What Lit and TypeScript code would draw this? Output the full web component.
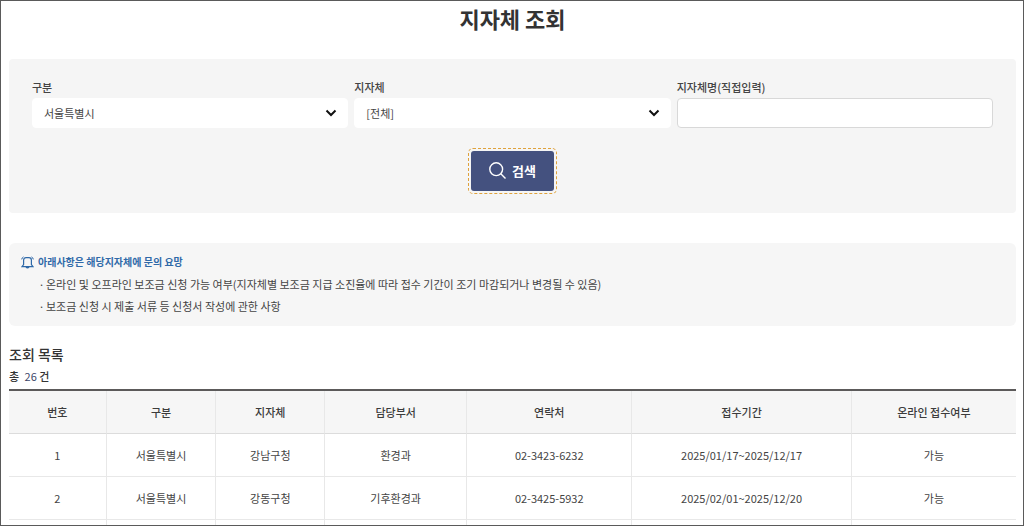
import { LitElement, html, css } from "lit";
import { customElement, property, state } from "lit/decorators.js";

interface Office {
  no: number;
  region: string;
  name: string;
  department: string;
  phone: string;
  period: string;
  online: string;
}

const OFFICES: Office[] = [
  { no: 1, region: "서울특별시", name: "강남구청", department: "환경과", phone: "02-3423-6232", period: "2025/01/17~2025/12/17", online: "가능" },
  { no: 2, region: "서울특별시", name: "강동구청", department: "기후환경과", phone: "02-3425-5932", period: "2025/02/01~2025/12/20", online: "가능" },
];

@customElement("search-panel")
class SearchPanel extends LitElement {
  static styles = css`
    :host {
      display: block;
    }
    .panel {
      display: flex;
      flex-direction: column;
      align-items: center;
      gap: 23px;
      padding: 18px 23px 22px;
      border-radius: 4px;
      background: #f5f5f5;
    }
    .fields {
      display: grid;
      grid-template-columns: repeat(3, 1fr);
      gap: 6px;
      align-self: stretch;
    }
    .field {
      display: flex;
      flex-direction: column;
      gap: 1px;
      min-width: 0;
    }
    .label {
      font-size: 11px;
      line-height: 20px;
      font-weight: 500;
      color: #444;
    }
    .picker {
      display: grid;
      align-items: center;
    }
    .picker > * {
      grid-area: 1 / 1;
    }
    .control {
      box-sizing: border-box;
      width: 100%;
      height: 30px;
      margin: 0;
      padding: 0 11px;
      border: 1px solid #fff;
      border-radius: 4px;
      background: #fff;
      color: #444;
      font: inherit;
      font-size: 11px;
      appearance: none;
    }
    .text {
      border-color: #d8d8d8;
    }
    .chevron {
      justify-self: end;
      width: 12px;
      height: 8px;
      margin-right: 11px;
      pointer-events: none;
    }
    .search {
      display: flex;
      align-items: center;
      justify-content: center;
      gap: 6px;
      height: 40px;
      padding: 0 18px 2px;
      border: 0;
      border-radius: 3px;
      background: #44517f;
      color: #fff;
      font: inherit;
      font-size: 13px;
      font-weight: 700;
    }
    .focus {
      margin: -3px;
      padding: 2px;
      border: 1px dashed #dfa23c;
      border-radius: 5px;
    }
    .lens {
      width: 17px;
      height: 17px;
    }
  `;

  private chevron() {
    return html`<svg class="chevron" viewBox="0 0 12 8" aria-hidden="true">
      <path d="M1.5 1.5 6 6l4.500-4.500" fill="none" stroke="#111" stroke-width="2" />
    </svg>`;
  }

  render() {
    return html`
      <form class="panel" @submit=${(e: Event) => e.preventDefault()}>
        <div class="fields">
          <div class="field">
            <label class="label" for="region">구분</label>
            <div class="picker">
              <select class="control" id="region"><option>서울특별시</option></select>
              ${this.chevron()}
            </div>
          </div>
          <div class="field">
            <label class="label" for="office">지자체</label>
            <div class="picker">
              <select class="control" id="office"><option>[전체]</option></select>
              ${this.chevron()}
            </div>
          </div>
          <div class="field">
            <label class="label" for="name">지자체명(직접입력)</label>
            <input class="control text" id="name" type="text" />
          </div>
        </div>
        <div class="focus">
          <button class="search" type="submit">
            <svg class="lens" viewBox="0 0 17 17" fill="none" stroke="#fff" stroke-width="1.400" aria-hidden="true">
              <circle cx="7.200" cy="7.200" r="6.400" />
              <path d="m11.800 11.800 4.700 4.700" />
            </svg>
            검색
          </button>
        </div>
      </form>
    `;
  }
}

@customElement("notice-box")
class NoticeBox extends LitElement {
  static styles = css`
    :host {
      display: block;
    }
    .notice {
      padding: 9px 12px;
      border-radius: 6px;
      background: #f6f6f6;
    }
    .title {
      display: flex;
      align-items: center;
      gap: 4px;
      margin: 0 0 1px;
      font-size: 10px;
      line-height: 20px;
      font-weight: 700;
      color: #2f69a8;
    }
    .bell {
      width: 13px;
      height: 13px;
    }
    .list {
      margin: 0;
      padding: 0 0 0 16px;
      list-style: none;
      font-size: 11px;
      line-height: 22px;
      color: #444;
    }
    .item {
      display: flex;
    }
    .item::before {
      content: "·";
      flex: none;
      width: 9px;
      text-align: center;
    }
  `;

  render() {
    return html`
      <section class="notice">
        <h2 class="title">
          <svg class="bell" viewBox="0 0 13 13" fill="none" stroke="#2f69a8" stroke-width="1.200" aria-hidden="true">
            <path d="M2.600 8.600V4.300Q2.600 1.700 5 1.700H8Q10.400 1.700 10.400 4.300V8.600L12 10.700H1ZM5 11q1.500 1.600 3 0" />
            <path d="M.7 3.400Q.9 1.600 2.500.9M12.300 3.400Q12.100 1.600 10.500.9" stroke-width="1" />
          </svg>
          아래사항은 해당지자체에 문의 요망
        </h2>
        <ul class="list">
          <li class="item">온라인 및 오프라인 보조금 신청 가능 여부(지자체별 보조금 지급 소진율에 따라 접수 기간이 조기 마감되거나 변경될 수 있음)</li>
          <li class="item">보조금 신청 시 제출 서류 등 신청서 작성에 관한 사항</li>
        </ul>
      </section>
    `;
  }
}

@customElement("office-table")
class OfficeTable extends LitElement {
  @property({ attribute: false }) offices: Office[] = [];

  static styles = css`
    :host {
      display: block;
    }
    .table {
      width: 100%;
      table-layout: fixed;
      border-spacing: 0;
      border-top: 2px solid #5c5a5a;
      font-size: 11px;
      line-height: 16px;
      text-align: center;
      color: #444;
    }
    .no { width: 9.7%; }
    .region { width: 10.9%; }
    .name { width: 10.8%; }
    .department { width: 14.1%; }
    .phone { width: 16.4%; }
    .period { width: 21.8%; }
    .cell {
      box-sizing: border-box;
      height: 43px;
      padding: 0;
      border-right: 1px solid #e8e8e8;
      border-bottom: 1px solid #e8e8e8;
      font-weight: 400;
    }
    .cell:last-child {
      border-right: 0;
    }
    .head {
      background: #f6f6f6;
      color: #3c3c3c;
      font-weight: 500;
      border-bottom-color: #dcdcdc;
    }
  `;

  render() {
    return html`
      <table class="table">
        <thead>
          <tr>
            <th class="cell head no" scope="col">번호</th>
            <th class="cell head region" scope="col">구분</th>
            <th class="cell head name" scope="col">지자체</th>
            <th class="cell head department" scope="col">담당부서</th>
            <th class="cell head phone" scope="col">연락처</th>
            <th class="cell head period" scope="col">접수기간</th>
            <th class="cell head" scope="col">온라인 접수여부</th>
          </tr>
        </thead>
        <tbody>
          ${this.offices.map(
            (o) => html`<tr>
              ${[o.no, o.region, o.name, o.department, o.phone, o.period, o.online].map(
                (value) => html`<td class="cell">${value}</td>`
              )}
            </tr>`
          )}
          <tr>
            ${Array.from({ length: 7 }, () => html`<td class="cell"></td>`)}
          </tr>
        </tbody>
      </table>
    `;
  }
}

@customElement("app-root")
class AppRoot extends LitElement {
  @state() private offices = OFFICES;

  static styles = css`
    :host {
      display: block;
      box-sizing: border-box;
      height: 100vh;
      overflow: hidden;
      border: 1px solid #5a5a5a;
      background: #fff;
      color: #333;
      font-family: "Noto Sans CJK KR", sans-serif;
    }
    .page {
      padding: 1px 7px 0 8px;
    }
    .heading {
      margin: 0 0 25px;
      font-size: 22px;
      line-height: 32px;
      font-weight: 700;
      text-align: center;
    }
    .notice {
      margin-top: 30px;
    }
    .subheading {
      margin: 16px 0 0;
      font-size: 14px;
      line-height: 24px;
      font-weight: 500;
    }
    .count {
      margin: 0 0 3px;
      font-size: 11px;
      line-height: 20px;
      font-weight: 500;
    }
    .number {
      margin-left: 3px;
      font-weight: 400;
      color: #3c4668;
    }
  `;

  render() {
    return html`
      <main class="page">
        <h1 class="heading">지자체 조회</h1>
        <search-panel></search-panel>
        <notice-box class="notice"></notice-box>
        <h2 class="subheading">조회 목록</h2>
        <p class="count">총 <span class="number">26</span> 건</p>
        <office-table .offices=${this.offices}></office-table>
      </main>
    `;
  }
}
